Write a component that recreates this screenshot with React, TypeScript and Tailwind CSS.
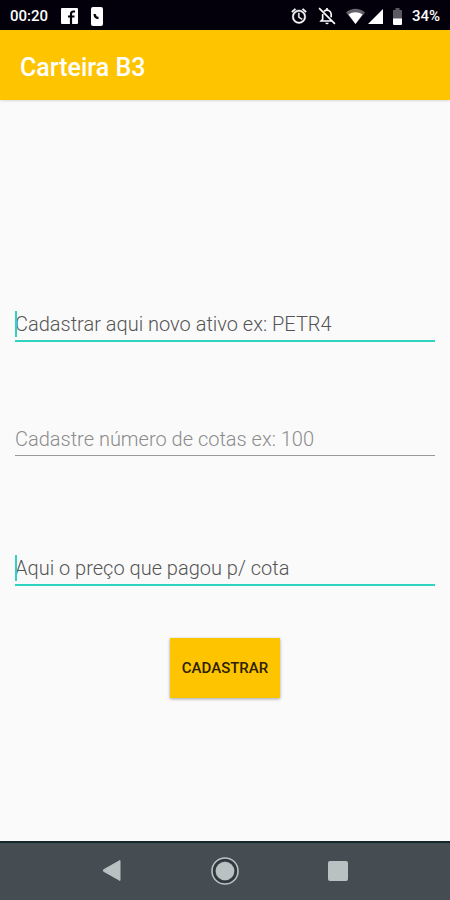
import { useState } from "react";

type FieldProps = {
    label: string;
    value: string;
    active?: boolean;
    onChange: (value: string) => void;
};

function StatusBar() {
    return (
        <div className="flex h-[30px] items-center justify-between bg-[#03000c] px-[10px] pt-[2px] text-white">
            <div className="flex items-center">
                <span className="w-[51px] text-[15px] font-medium">00:20</span>
                {/* Facebook */}
                <svg className="h-4 w-[17px]" viewBox="0 0 17 16">
                    <rect width="17" height="16" rx="1" fill="#fff" />
                    <path d="M14 3.500h-1.500c-1.600 0-2.500 1-2.500 2.500V16M7 8.500h6.500" fill="none" stroke="#03000c" strokeWidth="2.200" />
                </svg>
                {/* Phone */}
                <svg className="ml-[13px] h-[19px] w-[12px]" viewBox="0 0 12 19">
                    <rect width="12" height="19" rx="2" fill="#fff" />
                    <path d="M2.500 7c0 3.200 1.800 5.200 5 5.200v-2.400L5.800 9.600 4.600 7z" fill="#03000c" />
                </svg>
            </div>
            <div className="flex items-center">
                {/* Alarm */}
                <svg className="h-[18px] w-[18px]" viewBox="0 0 24 24" fill="#fff" stroke="#fff" strokeWidth="0.500">
                    <path d="M22 5.720l-4.600-3.860-1.290 1.530 4.600 3.860L22 5.720zM7.880 3.390L6.600 1.860 2 5.710l1.290 1.530 4.590-3.850zM12.500 8H11v6l4.750 2.850.75-1.230-4-2.370V8zM12 4c-4.970 0-9 4.030-9 9s4.020 9 9 9c4.970 0 9-4.030 9-9s-4.030-9-9-9zm0 16c-3.870 0-7-3.130-7-7s3.130-7 7-7 7 3.130 7 7-3.130 7-7 7z" />
                </svg>
                {/* Muted bell */}
                <svg className="ml-[9px] h-5 w-5" viewBox="0 0 24 24" fill="none" stroke="#fff" strokeWidth="2">
                    <path d="M8.500 6.500C9.400 5.600 10.600 5 12 5c3 0 5 2.500 5 5.500v3M6.800 9.500V16L5 18h13M12 5V2.500M2.500 2.500l19 19" />
                    <path d="M10 20h4a2 2 0 0 1-4 0z" fill="#fff" stroke="none" />
                </svg>
                {/* Wifi */}
                <svg className="ml-[9px] h-4 w-[19px]" viewBox="0 0 19 16">
                    <path d="M0 4.500C5.500-.5 13.500-.5 19 4.500L9.500 16z" fill="#66636d" />
                    <path d="M2.500 6.500c4.500-3 9.500-3 14 0L9.500 16z" fill="#fff" />
                </svg>
                <svg className="ml-[3px] h-[15px] w-[15px]" viewBox="0 0 14 14">
                    <path d="M14 0v14H0z" fill="#fff" />
                </svg>
                {/* Battery */}
                <svg className="ml-[10px] h-[17px] w-[9px]" viewBox="0 0 9 17">
                    <path d="M2.500 0h4v2H9v9H0V2h2.500z" fill="#5c5962" />
                    <path d="M0 10.500h9V16a1 1 0 0 1-1 1H1a1 1 0 0 1-1-1z" fill="#fff" />
                </svg>
                <span className="ml-[10px] text-[15px] font-medium">34%</span>
            </div>
        </div>
    );
}

function Field({ label, value, active, onChange }: FieldProps) {
    return (
        <div className="relative">
            <input
                type="text"
                aria-label={label}
                placeholder={label}
                value={value}
                onChange={(e) => onChange(e.target.value)}
                className={`block h-[34px] w-full text-[20px] leading-6 font-light text-[#212121] outline-none ${
                    active
                        ? "border-b-2 border-[#2fd3c0] placeholder:text-[#555555]"
                        : "border-b border-[#999999] placeholder:text-[#8c8c8c]"
                }`}
            />
            {active && !value && <span className="absolute top-[3px] left-0 h-[26px] w-[2px] bg-[#2fd3c0]" />}
        </div>
    );
}

export default function App() {
    const [ativo, setAtivo] = useState("");
    const [cotas, setCotas] = useState("");
    const [preco, setPreco] = useState("");

    return (
        <div className="flex min-h-screen flex-col bg-[#fafafa] font-['Roboto',sans-serif]">
            <StatusBar />

            {/* Header */}
            <header className="z-10 flex h-[70px] items-center bg-[#ffc400] px-5 pt-[6px] shadow-sm">
                <h1 className="text-[25px] font-medium text-white">Carteira B3</h1>
            </header>

            {/* Form */}
            <form className="flex flex-1 flex-col px-[15px] pt-[208px]" onSubmit={(e) => e.preventDefault()}>
                <Field label="Cadastrar aqui novo ativo ex: PETR4" value={ativo} onChange={setAtivo} active />
                <div className="mt-20">
                    <Field label="Cadastre número de cotas ex: 100" value={cotas} onChange={setCotas} />
                </div>
                <div className="mt-24">
                    <Field label="Aqui o preço que pagou p/ cota" value={preco} onChange={setPreco} active />
                </div>
                <button
                    type="submit"
                    className="mt-[52px] h-[60px] w-[110px] self-center bg-[#ffc400] text-[15px] font-medium text-[#2b2000] shadow-[0_1px_3px_rgba(0,0,0,0.35)]"
                >
                    CADASTRAR
                </button>
            </form>

            {/* Navigation */}
            <nav className="grid h-[59px] grid-cols-3 border-t-2 border-[#12292b] bg-[#454d52] px-14 pb-[2px]">
                <button type="button" aria-label="Voltar" className="flex items-center justify-center">
                    <svg className="h-[21px] w-[18px]" viewBox="0 0 18 21">
                        <path d="M17 .5v20L.5 11.200v-1.400z" fill="#b9c1c2" stroke="#b9c1c2" strokeLinejoin="round" />
                    </svg>
                </button>
                <button type="button" aria-label="Início" className="flex items-center justify-center">
                    <svg className="h-7 w-7" viewBox="0 0 28 28">
                        <circle cx="14" cy="14" r="13" fill="none" stroke="#b9c1c2" strokeWidth="1.600" />
                        <circle cx="14" cy="14" r="11" fill="none" stroke="#30383b" strokeWidth="2" />
                        <circle cx="14" cy="14" r="9.300" fill="#b9c1c2" />
                    </svg>
                </button>
                <button type="button" aria-label="Recentes" className="flex items-center justify-center">
                    <span className="h-5 w-5 rounded-xs bg-[#b9c1c2]" />
                </button>
            </nav>
        </div>
    );
}
